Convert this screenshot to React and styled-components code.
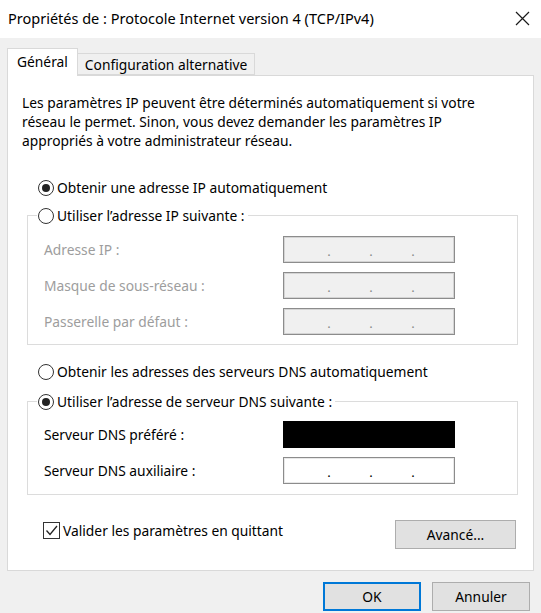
import React from 'react';
import styled, {createGlobalStyle} from "styled-components";

const GlobalStyle = createGlobalStyle`
  html, body {
    margin: 0;
    padding: 0;
    background: #f0f0f0;
  }
`;

const ipRows = [
    {label: 'Adresse IP :'},
    {label: 'Masque de sous-réseau :'},
    {label: 'Passerelle par défaut :'},
];

const Radio = ({checked, children}) => (
    <OptionRow>
        <RadioCircle $checked={checked}/>
        <span>{children}</span>
    </OptionRow>
);

const IpBox = ({disabled, masked}) => (
    <IpField $disabled={disabled} $masked={masked}>
        {!masked && [0, 1, 2].map(i => <Dot key={i}>.</Dot>)}
    </IpField>
);

const App = () => {
    return (
        <Window>
            <GlobalStyle/>
            <TitleBar>
                <Title>Propriétés de : Protocole Internet version 4 (TCP/IPv4)</Title>
                <svg width="15" height="15" viewBox="0 0 15 15">
                    <path d="M1 1 L14 14 M14 1 L1 14" stroke="#1a1a1a" strokeWidth="1.2" fill="none"/>
                </svg>
            </TitleBar>

            <Body>
                <Tabs>
                    <Tab $active>Général</Tab>
                    <Tab>Configuration alternative</Tab>
                </Tabs>

                <Panel>
                    <Intro>
                        Les paramètres IP peuvent être déterminés automatiquement si votre<br/>
                        réseau le permet. Sinon, vous devez demander les paramètres IP<br/>
                        appropriés à votre administrateur réseau.
                    </Intro>

                    <TopOption>
                        <Radio checked>Obtenir une adresse IP automatiquement</Radio>
                    </TopOption>

                    <Group $top={9}>
                        <Legend>
                            <Radio>Utiliser l’adresse IP suivante :</Radio>
                        </Legend>
                        <FieldGrid $padTop={11} $padBottom={9}>
                            {ipRows.map(row => (
                                <React.Fragment key={row.label}>
                                    <FieldLabel $disabled>{row.label}</FieldLabel>
                                    <IpBox disabled/>
                                </React.Fragment>
                            ))}
                        </FieldGrid>
                    </Group>

                    <MidOption>
                        <Radio>Obtenir les adresses des serveurs DNS automatiquement</Radio>
                    </MidOption>

                    <Group $top={11}>
                        <Legend>
                            <Radio checked>Utiliser l’adresse de serveur DNS suivante :</Radio>
                        </Legend>
                        <FieldGrid $padTop={10} $padBottom={10}>
                            <FieldLabel>Serveur DNS préféré :</FieldLabel>
                            <IpBox masked/>
                            <FieldLabel>Serveur DNS auxiliaire :</FieldLabel>
                            <IpBox/>
                        </FieldGrid>
                    </Group>

                    <CheckRow>
                        <CheckLabel>
                            <CheckBox>
                                <svg width="15" height="15" viewBox="0 0 15 15">
                                    <path d="M2.5 7.5 L6 11.5 L13 3" stroke="#222" strokeWidth="1.3" fill="none"/>
                                </svg>
                            </CheckBox>
                            <span>Valider les paramètres en quittant</span>
                        </CheckLabel>
                        <Button $width={121}>Avancé...</Button>
                    </CheckRow>
                </Panel>

                <Footer>
                    <Button $width={98} $primary>OK</Button>
                    <Button $width={98}>Annuler</Button>
                </Footer>
            </Body>
        </Window>
    );
};

const Window = styled.div`
  width: 541px;
  height: 613px;
  background: #f0f0f0;
  font-family: "Noto Sans", "Open Sans", sans-serif;
  font-size: 13.8px;
  color: #000;
  overflow: hidden;
`;

const TitleBar = styled.div`
  height: 38px;
  background: #fff;
  display: flex;
  align-items: center;
  justify-content: space-between;
  padding: 0 11px 2px 8px;
  box-sizing: border-box;
`;

const Title = styled.div`
  font-size: 14.5px;
  color: #000;
`;

const Body = styled.div`
  padding: 10px 7px 0;
`;

const Tabs = styled.div`
  display: flex;
  align-items: flex-end;
  height: 27px;
  position: relative;
  z-index: 1;
`;

const Tab = styled.div`
  box-sizing: border-box;
  height: ${p => p.$active ? '28px' : '22px'};
  margin-bottom: ${p => p.$active ? '-1px' : '0'};
  padding: 0 ${p => p.$active ? '9px' : '7px'};
  background: ${p => p.$active ? '#fff' : '#f0f0f0'};
  border: 1px solid #d9d9d9;
  border-bottom: ${p => p.$active ? 'none' : '1px solid #d9d9d9'};
  border-left: ${p => p.$active ? '1px solid #d9d9d9' : 'none'};
  display: flex;
  align-items: center;
  padding-bottom: ${p => p.$active ? '3px' : '0'};
`;

const Panel = styled.div`
  box-sizing: border-box;
  height: 496px;
  background: #fff;
  border: 1px solid #d9d9d9;
  display: flex;
  flex-direction: column;
`;

const Intro = styled.p`
  margin: 0;
  padding: 17px 0 0 14px;
  line-height: 19px;
`;

const TopOption = styled.div`
  margin: 28px 0 0 30px;
`;

const MidOption = styled.div`
  margin: 17px 0 0 30px;
`;

const OptionRow = styled.div`
  display: flex;
  align-items: center;
  gap: 3px;
  line-height: 19px;
  white-space: nowrap;
`;

const RadioCircle = styled.span`
  box-sizing: border-box;
  width: 16px;
  height: 16px;
  border-radius: 50%;
  border: 1px solid #333;
  background: #fff;
  display: flex;
  align-items: center;
  justify-content: center;

  &::after {
    content: '';
    width: 8px;
    height: 8px;
    border-radius: 50%;
    background: ${p => p.$checked ? '#222' : 'transparent'};
  }
`;

const Group = styled.fieldset`
  margin: ${p => p.$top}px 0 0 19px;
  width: 491px;
  box-sizing: border-box;
  border: 1px solid #dcdcdc;
  padding: 0;
  min-width: 0;
`;

const Legend = styled.legend`
  margin-left: 9px;
  padding: 0 3px 0 1px;
`;

const FieldGrid = styled.div`
  display: grid;
  grid-template-columns: 239px 172px;
  row-gap: 9px;
  padding: ${p => p.$padTop}px 0 ${p => p.$padBottom}px 16px;
  align-items: center;
`;

const FieldLabel = styled.div`
  color: ${p => p.$disabled ? '#9d9d9d' : '#000'};
  line-height: 19px;
`;

const IpField = styled.div`
  box-sizing: border-box;
  height: 27px;
  border: 1px solid ${p => p.$masked ? '#000' : '#8c8c8c'};
  box-shadow: inset 0 0 0 1px ${p => p.$masked ? '#000' : p.$disabled ? '#d4d4d4' : '#e8e8e8'};
  background: ${p => p.$masked ? '#000' : p.$disabled ? '#f0f0f0' : '#fff'};
  color: ${p => p.$disabled ? '#8a8a8a' : '#000'};
  display: flex;
  align-items: flex-end;
  padding: 0 0 3px 43px;
  gap: 38px;
  font-size: 13px;
  line-height: 16px;
`;

const Dot = styled.span`
  width: 4px;
  text-align: center;
`;

const CheckRow = styled.div`
  display: flex;
  align-items: center;
  justify-content: space-between;
  margin-top: 25px;
  padding: 0 17px 0 35px;
`;

const CheckLabel = styled.div`
  display: flex;
  align-items: center;
  gap: 3px;
  margin-top: -9px;
`;

const CheckBox = styled.span`
  box-sizing: border-box;
  width: 17px;
  height: 17px;
  border: 1px solid #333;
  display: flex;
  align-items: center;
  justify-content: center;
  background: #fff;
`;

const Button = styled.div`
  box-sizing: border-box;
  width: ${p => p.$width}px;
  height: 29px;
  background: #e1e1e1;
  border: ${p => p.$primary ? '2px solid #0078d7' : '1px solid #adadad'};
  display: flex;
  align-items: center;
  justify-content: center;
`;

const Footer = styled.div`
  display: flex;
  justify-content: flex-end;
  gap: 11px;
  padding: 11px 4px 0 0;
`;

export default App;
